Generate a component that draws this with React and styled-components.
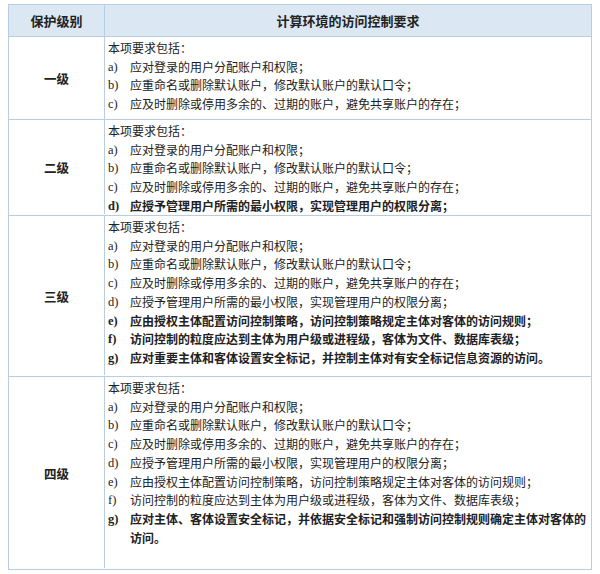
import React from "react";
import styled, { createGlobalStyle } from "styled-components";

const G = createGlobalStyle`
  body { margin: 0; background: #fff; font-family: "Noto Sans CJK SC", "Liberation Sans", sans-serif; }
`;
const Table = styled.div`
  margin: 4px 8px 0 8px;
  display: grid;
  grid-template-columns: 95px 1fr;
  border: 1px solid #b9cde0;
  color: #222;
`;
const Head = styled.div`
  background: #dbe7f3;
  height: 31px;
  display: flex; align-items: center; justify-content: center;
  font-weight: bold; font-size: 13px;
  border-bottom: 1px solid #b9cde0;
  border-left: ${p => (p.$second ? "1px solid #b9cde0" : "none")};
`;
const Level = styled.div`
  display: flex; align-items: center; justify-content: center;
  font-size: 12.5px; font-weight: bold;
  height: ${p => p.$h}px;
  border-top: ${p => (p.$first ? "none" : "1px solid #b9cde0")};
`;
const Cell = styled.div`
  height: ${p => p.$h}px;
  box-sizing: border-box;
  padding: 2px 4px 0 3px;
  font-size: 12px; line-height: 18.7px;
  border-left: 1px solid #b9cde0;
  border-top: ${p => (p.$first ? "none" : "1px solid #b9cde0")};
`;
const Line = styled.div`
  display: flex;
  font-weight: ${p => (p.$b ? "bold" : "normal")};
`;
const Tag = styled.span`
  flex: 0 0 22px; font-family: "Liberation Serif", serif; font-size: 12.5px;
`;

const items = [
  "应对登录的用户分配账户和权限；",
  "应重命名或删除默认账户，修改默认账户的默认口令；",
  "应及时删除或停用多余的、过期的账户，避免共享账户的存在；",
  "应授予管理用户所需的最小权限，实现管理用户的权限分离；",
  "应由授权主体配置访问控制策略，访问控制策略规定主体对客体的访问规则；",
  "访问控制的粒度应达到主体为用户级或进程级，客体为文件、数据库表级；",
];
const g3 = "应对重要主体和客体设置安全标记，并控制主体对有安全标记信息资源的访问。";
const g4 = "应对主体、客体设置安全标记，并依据安全标记和强制访问控制规则确定主体对客体的访问。";

const rows = [
  { name: "一级", h: 82, n: 3, bold: [] },
  { name: "二级", h: 95, n: 4, bold: [3] },
  { name: "三级", h: 160, n: 6, bold: [4, 5, 6], g: g3 },
  { name: "四级", h: 192, n: 6, bold: [6], g: g4 },
];
const L = "abcdefg";

export default function App() {
  return (
    <>
      <G />
      <Table>
        <Head>保护级别</Head>
        <Head $second>计算环境的访问控制要求</Head>
        {rows.map((r, ri) => {
          const list = items.slice(0, r.n);
          if (r.g) list.push(r.g);
          return (
            <React.Fragment key={r.name}>
              <Level $h={r.h} $first={ri === 0}>{r.name}</Level>
              <Cell $h={r.h} $first={ri === 0}>
                <Line>本项要求包括：</Line>
                {list.map((t, i) => (
                  <Line key={i} $b={r.bold.includes(i)}>
                    <Tag>{L[i]})</Tag>
                    <span>{t}</span>
                  </Line>
                ))}
              </Cell>
            </React.Fragment>
          );
        })}
      </Table>
    </>
  );
}
